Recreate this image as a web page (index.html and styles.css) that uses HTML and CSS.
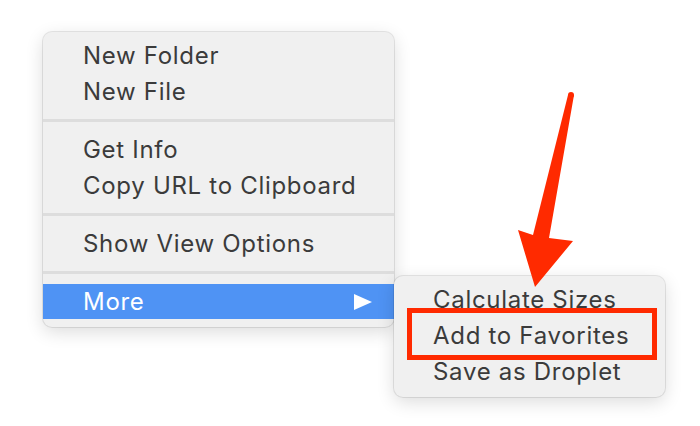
FILE: index.html
```html
<!DOCTYPE html>
<html>
<head>
<meta charset="utf-8">
<link rel="stylesheet" href="styles.css">
</head>
<body>
<div class="stage">
  <div class="menu main-menu">
    <div class="item">New Folder</div>
    <div class="item">New File</div>
    <div class="sep"></div>
    <div class="item">Get Info</div>
    <div class="item">Copy URL to Clipboard</div>
    <div class="sep"></div>
    <div class="item">Show View Options</div>
    <div class="sep"></div>
    <div class="item active">More<span class="tri"></span></div>
  </div>
  <div class="menu sub-menu">
    <div class="item">Calculate Sizes</div>
    <div class="item">Add to Favorites</div>
    <div class="item">Save as Droplet</div>
  </div>
  <div class="redbox"></div>
  <svg class="arrow" width="700" height="426" viewBox="0 0 700 426">
    <circle cx="571" cy="95" r="3" fill="#ff2a00"/>
    <polygon fill="#ff2a00" points="568,95 574,95 549,238 573,241 535,287 518,230 533,235"/>
  </svg>
</div>
</body>
</html>
```
FILE: styles.css
```css
html, body {
  margin: 0;
  padding: 0;
  background: #ffffff;
}
.stage {
  position: relative;
  width: 700px;
  height: 426px;
  overflow: hidden;
  padding: 32px 0 0 43px;
  box-sizing: border-box;
  font-family: "Inter", "Noto Sans", sans-serif;
  font-size: 24px;
  letter-spacing: 0.7px;
  color: #3b3b3b;
}
.menu {
  background: #f0f0f0;
  border-radius: 9px;
  box-shadow: 0 0 0 1px rgba(0,0,0,0.09), 0 5px 18px rgba(0,0,0,0.14);
  box-sizing: border-box;
}
.main-menu {
  width: 351px;
  padding: 6px 0 7px;
}
.item {
  height: 36px;
  line-height: 36px;
  padding-left: 40px;
  display: flex;
  align-items: center;
  justify-content: space-between;
  padding-right: 22px;
  white-space: nowrap;
}
.sep {
  height: 22px;
  position: relative;
}
.sep::after {
  content: "";
  position: absolute;
  left: 0;
  right: 0;
  top: 9px;
  height: 3px;
  background: #dddddd;
}
.item.active {
  background: #4f93f4;
  color: #ffffff;
  height: 35px;
  margin-bottom: 1px;
}
.tri {
  width: 0;
  height: 0;
  border-top: 8.5px solid transparent;
  border-bottom: 8.5px solid transparent;
  border-left: 18px solid #ffffff;
}
.sub-menu {
  position: absolute;
  left: 394px;
  top: 276px;
  width: 271px;
  padding: 6px 0 7px;
}
.sub-menu .item {
  padding-left: 39px;
}
.redbox {
  position: absolute;
  left: 407px;
  top: 308px;
  width: 250px;
  height: 52px;
  border: 5px solid #ff2a00;
  box-sizing: border-box;
}
.arrow {
  position: absolute;
  left: 0;
  top: 0;
}
```
